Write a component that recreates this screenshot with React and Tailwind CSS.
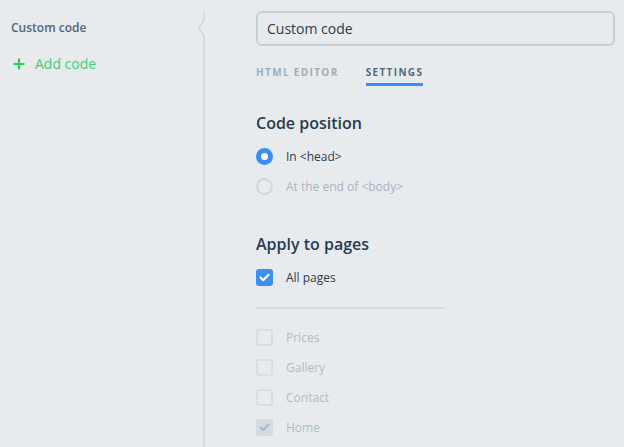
import React from 'react';

const pages = [
	{ name: 'Prices', checked: false },
	{ name: 'Gallery', checked: false },
	{ name: 'Contact', checked: false },
	{ name: 'Home', checked: true }
];

const Check = ({ color }) => (
	<svg width="11" height="9" viewBox="0 0 11 9" fill="none">
		<path d="M1.5 4.5L4.2 7.2L9.5 1.8" stroke={color} strokeWidth="2.2" strokeLinecap="round" strokeLinejoin="round" />
	</svg>
);

const App = () => {
	return (
		<div className="flex h-screen bg-[#e8ebee] overflow-hidden" style={{ fontFamily: '"Open Sans", sans-serif' }}>
			<aside className="w-[197px] shrink-0 pl-[11px] pt-[19px]">
				<div className="text-[12px] font-semibold text-[#4f6679] leading-[18px]">Custom code</div>
				<button className="mt-[17px] flex items-center text-[#3ecf6f] text-[14px] leading-[20px]">
					<svg width="12" height="12" viewBox="0 0 12 12" className="ml-[2px] mr-[10px]">
						<path d="M6 0.5V11.5M0.5 6H11.5" stroke="#2ecc5f" strokeWidth="2.2" />
					</svg>
					Add code
				</button>
			</aside>

			<div className="w-[8px] shrink-0 flex flex-col pt-[11px]">
				<svg width="8" height="26" viewBox="0 0 8 26" fill="none" className="block">
					<path d="M7 0V9L1.5 17L7 25V26" stroke="#d2d9df" strokeWidth="1.6" />
				</svg>
				<div className="flex-1 ml-[6.2px] w-[1.6px] bg-[#d2d9df]" />
			</div>

			<main className="flex-1 pl-[51px] pr-[9px] pt-[11px]">
				<input
					type="text"
					defaultValue="Custom code"
					className="w-full h-[35px] rounded-[6px] border-2 border-[#c5cfd7] bg-transparent px-[9px] text-[14px] text-[#2b3a47] focus:outline-none"
				/>

				<div className="mt-[19px] flex gap-[27px] text-[10px] font-bold tracking-[1.35px]">
					<div className="text-[#a0acb7] leading-[15px]">HTML EDITOR</div>
					<div className="text-[#52697c] leading-[15px] border-b-[3px] border-[#3a8ef6] pb-[3px]">SETTINGS</div>
				</div>

				<h2 className="mt-[26px] text-[16px] font-semibold text-[#263c4f] leading-[22px]">Code position</h2>
				<div className="mt-[14px] flex flex-col gap-[13px]">
					<label className="flex items-center gap-[13px] text-[12px] text-[#2c3b47] leading-[17px]">
						<span className="w-[17px] h-[17px] rounded-full bg-[#3a8ef6] flex items-center justify-center">
							<span className="w-[7px] h-[7px] rounded-full bg-white" />
						</span>
						In &lt;head&gt;
					</label>
					<label className="flex items-center gap-[13px] text-[12px] text-[#a6b4c0] leading-[17px]">
						<span className="w-[17px] h-[17px] rounded-full border-2 border-[#cfd7de]" />
						At the end of &lt;body&gt;
					</label>
				</div>

				<h2 className="mt-[38px] text-[16px] font-semibold text-[#263c4f] leading-[22px]">Apply to pages</h2>
				<label className="mt-[14px] flex items-center gap-[13px] text-[12px] text-[#2c3b47] leading-[17px]">
					<span className="w-[17px] h-[17px] rounded-[3px] bg-[#3a8ef6] flex items-center justify-center">
						<Check color="#ffffff" />
					</span>
					All pages
				</label>

				<div className="mt-[21px] w-[189px] h-[2px] bg-[#d6dce1]" />

				<div className="mt-[20px] flex flex-col gap-[13px]">
					{pages.map((p) => (
						<label key={p.name} className="flex items-center gap-[13px] text-[12px] text-[#aebbc6] leading-[17px]">
							{p.checked ? (
								<span className="w-[17px] h-[17px] rounded-[3px] bg-[#d3dbe2] flex items-center justify-center">
									<Check color="#aab8c4" />
								</span>
							) : (
								<span className="w-[17px] h-[17px] rounded-[3px] border-2 border-[#d6dde3]" />
							)}
							{p.name}
						</label>
					))}
				</div>
			</main>
		</div>
	);
};

export default App;
